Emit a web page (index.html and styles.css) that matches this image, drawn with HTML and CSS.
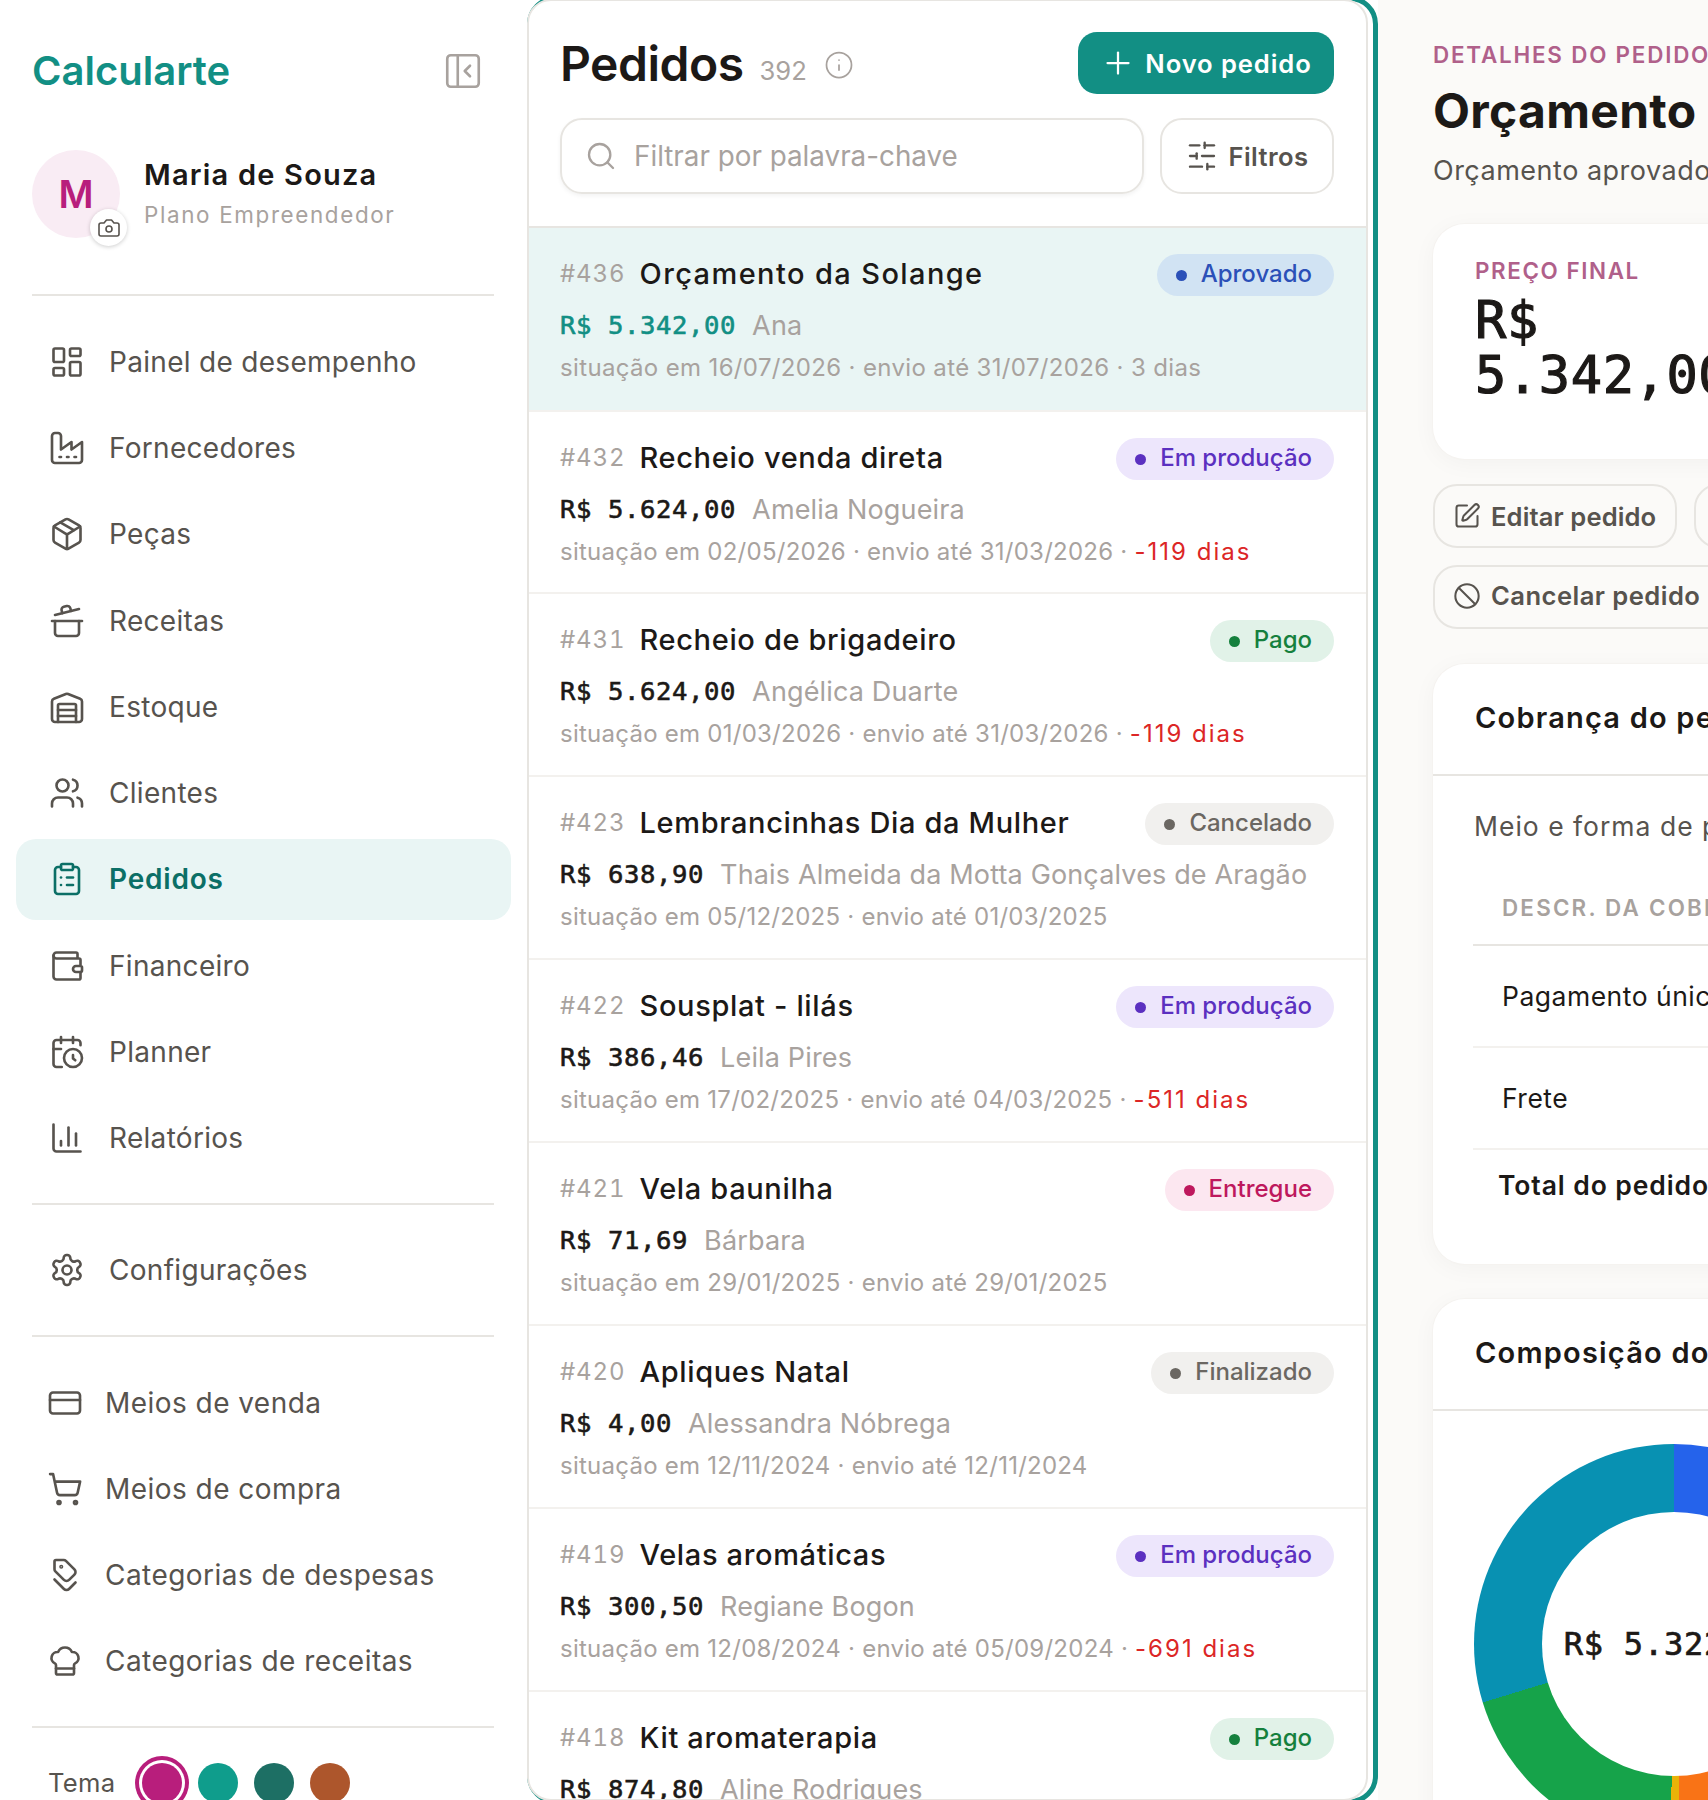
FILE: index.html
```html
<!DOCTYPE html>
<html lang="pt-BR">
<head>
  <meta charset="UTF-8" />
  <title>Calcularte - Pedidos</title>
  <link rel="stylesheet" href="styles.css">
</head>
<body>

  <aside class="side">
    <div class="brand">
      <span class="logo">Calcularte</span>
      <svg class="ico collapse" viewBox="0 0 24 24"><rect x="3" y="3" width="18" height="18" rx="2"/><path d="M9 3v18"/><path d="m16 15-3-3 3-3"/></svg>
    </div>

    <div class="profile">
      <div class="avatar">M
        <span class="cam"><svg class="ico" viewBox="0 0 24 24"><path d="M14.5 4h-5L7 7H4a2 2 0 0 0-2 2v9a2 2 0 0 0 2 2h16a2 2 0 0 0 2-2V9a2 2 0 0 0-2-2h-3l-2.5-3z"/><circle cx="12" cy="13" r="3"/></svg></span>
      </div>
      <div>
        <div class="uname">Maria de Souza</div>
        <div class="plan">Plano Empreendedor</div>
      </div>
    </div>

    <hr class="sep first">

    <nav class="nav">
      <a class="item"><svg class="ico" viewBox="0 0 24 24"><rect x="3" y="3" width="7" height="9" rx="1"/><rect x="14" y="3" width="7" height="5" rx="1"/><rect x="14" y="12" width="7" height="9" rx="1"/><rect x="3" y="16" width="7" height="5" rx="1"/></svg>Painel de desempenho</a>
      <a class="item"><svg class="ico" viewBox="0 0 24 24"><path d="M2 20a2 2 0 0 0 2 2h16a2 2 0 0 0 2-2V8l-7 5V8l-7 5V4a2 2 0 0 0-2-2H4a2 2 0 0 0-2 2Z"/><path d="M17 18h1"/><path d="M12 18h1"/><path d="M7 18h1"/></svg>Fornecedores</a>
      <a class="item"><svg class="ico" viewBox="0 0 24 24"><path d="M11 21.73a2 2 0 0 0 2 0l7-4A2 2 0 0 0 21 16V8a2 2 0 0 0-1-1.73l-7-4a2 2 0 0 0-2 0l-7 4A2 2 0 0 0 3 8v8a2 2 0 0 0 1 1.73z"/><path d="M12 22V12"/><path d="m3.3 7 7.703 4.734a2 2 0 0 0 1.994 0L20.7 7"/><path d="m7.5 4.27 9 5.15"/></svg>Peças</a>
      <a class="item"><svg class="ico" viewBox="0 0 24 24"><path d="M2 12h20"/><path d="M20 12v8a2 2 0 0 1-2 2H6a2 2 0 0 1-2-2v-8"/><path d="m4 8 16-4"/><path d="m8.86 6.78-.45-1.81a2 2 0 0 1 1.45-2.43l1.94-.48a2 2 0 0 1 2.43 1.46l.45 1.8"/></svg>Receitas</a>
      <a class="item"><svg class="ico" viewBox="0 0 24 24"><path d="M22 8.35V20a2 2 0 0 1-2 2H4a2 2 0 0 1-2-2V8.35A2 2 0 0 1 3.26 6.5l8-3.2a2 2 0 0 1 1.48 0l8 3.2A2 2 0 0 1 22 8.35Z"/><path d="M6 18h12"/><path d="M6 14h12"/><path d="M6 22V11a1 1 0 0 1 1-1h10a1 1 0 0 1 1 1v11"/></svg>Estoque</a>
      <a class="item"><svg class="ico" viewBox="0 0 24 24"><path d="M16 21v-2a4 4 0 0 0-4-4H6a4 4 0 0 0-4 4v2"/><circle cx="9" cy="7" r="4"/><path d="M22 21v-2a4 4 0 0 0-3-3.87"/><path d="M16 3.13a4 4 0 0 1 0 7.75"/></svg>Clientes</a>
      <a class="item on"><svg class="ico" viewBox="0 0 24 24"><rect x="8" y="2" width="8" height="4" rx="1"/><path d="M16 4h2a2 2 0 0 1 2 2v14a2 2 0 0 1-2 2H6a2 2 0 0 1-2-2V6a2 2 0 0 1 2-2h2"/><path d="M12 11h4"/><path d="M12 16h4"/><path d="M8 11h.01"/><path d="M8 16h.01"/></svg>Pedidos</a>
      <a class="item"><svg class="ico" viewBox="0 0 24 24"><path d="M19 7V4a1 1 0 0 0-1-1H5a2 2 0 0 0 0 4h15a1 1 0 0 1 1 1v4h-3a2 2 0 0 0 0 4h3a1 1 0 0 0 1-1v-2a1 1 0 0 0-1-1"/><path d="M3 5v14a2 2 0 0 0 2 2h15a1 1 0 0 0 1-1v-4"/></svg>Financeiro</a>
      <a class="item"><svg class="ico" viewBox="0 0 24 24"><path d="M21 7.5V6a2 2 0 0 0-2-2H5a2 2 0 0 0-2 2v14a2 2 0 0 0 2 2h3.5"/><path d="M16 2v4"/><path d="M8 2v4"/><path d="M3 10h5"/><path d="M17.5 17.5 16 16.3V14"/><circle cx="16" cy="16" r="6"/></svg>Planner</a>
      <a class="item"><svg class="ico" viewBox="0 0 24 24"><path d="M3 3v16a2 2 0 0 0 2 2h16"/><path d="M18 17V9"/><path d="M13 17V5"/><path d="M8 17v-3"/></svg>Relatórios</a>
    </nav>

    <hr class="sep">

    <nav class="nav">
      <a class="item"><svg class="ico" viewBox="0 0 24 24"><path d="M12.22 2h-.44a2 2 0 0 0-2 2v.18a2 2 0 0 1-1 1.73l-.43.25a2 2 0 0 1-2 0l-.15-.08a2 2 0 0 0-2.73.73l-.22.38a2 2 0 0 0 .73 2.73l.15.1a2 2 0 0 1 1 1.72v.51a2 2 0 0 1-1 1.74l-.15.09a2 2 0 0 0-.73 2.73l.22.38a2 2 0 0 0 2.73.73l.15-.08a2 2 0 0 1 2 0l.43.25a2 2 0 0 1 1 1.73V20a2 2 0 0 0 2 2h.44a2 2 0 0 0 2-2v-.18a2 2 0 0 1 1-1.73l.43-.25a2 2 0 0 1 2 0l.15.08a2 2 0 0 0 2.73-.73l.22-.39a2 2 0 0 0-.73-2.73l-.15-.08a2 2 0 0 1-1-1.74v-.5a2 2 0 0 1 1-1.74l.15-.09a2 2 0 0 0 .73-2.73l-.22-.38a2 2 0 0 0-2.73-.73l-.15.08a2 2 0 0 1-2 0l-.43-.25a2 2 0 0 1-1-1.73V4a2 2 0 0 0-2-2z"/><circle cx="12" cy="12" r="3"/></svg>Configurações</a>
    </nav>

    <hr class="sep">

    <nav class="nav small">
      <a class="item"><svg class="ico" viewBox="0 0 24 24"><rect x="2" y="5" width="20" height="14" rx="2"/><path d="M2 10h20"/></svg>Meios de venda</a>
      <a class="item"><svg class="ico" viewBox="0 0 24 24"><circle cx="8" cy="21" r="1"/><circle cx="19" cy="21" r="1"/><path d="M2.05 2.05h2l2.66 12.42a2 2 0 0 0 2 1.58h9.78a2 2 0 0 0 1.95-1.57l1.65-7.43H5.12"/></svg>Meios de compra</a>
      <a class="item"><svg class="ico" viewBox="0 0 24 24"><g transform="matrix(0 1 1 0 0 0)"><path d="m15 5 6.3 6.3a2.4 2.4 0 0 1 0 3.4L17 19"/><path d="M9.586 5.586A2 2 0 0 0 8.172 5H3a1 1 0 0 0-1 1v5.172a2 2 0 0 0 .586 1.414L8.29 18.29a2.426 2.426 0 0 0 3.42 0l3.58-3.58a2.426 2.426 0 0 0 0-3.42z"/><circle cx="6.5" cy="9.5" r=".5"/></g></svg>Categorias de despesas</a>
      <a class="item"><svg class="ico" viewBox="0 0 24 24"><path d="M17 21a1 1 0 0 0 1-1v-5.35c0-.457.316-.844.727-1.041a4 4 0 0 0-2.134-7.589 5 5 0 0 0-9.186 0 4 4 0 0 0-2.134 7.588c.411.198.727.585.727 1.041V20a1 1 0 0 0 1 1Z"/><path d="M6 17h12"/></svg>Categorias de receitas</a>
    </nav>

    <hr class="sep">

    <div class="theme">
      <span class="theme-label">Tema</span>
      <span class="swatch magenta"></span>
      <span class="swatch teal"></span>
      <span class="swatch forest"></span>
      <span class="swatch rust"></span>
    </div>
  </aside>

  <div class="ring">
    <main class="list">
      <header class="list-head">
        <div class="title-row">
          <h1>Pedidos</h1>
          <span class="count">392</span>
          <svg class="ico info" viewBox="0 0 24 24"><circle cx="12" cy="12" r="10"/><path d="M12 16v-4"/><path d="M12 8h.01"/></svg>
          <button class="btn-new"><svg class="ico" viewBox="0 0 24 24"><path d="M5 12h14"/><path d="M12 5v14"/></svg>Novo pedido</button>
        </div>
        <div class="search-row">
          <div class="search"><svg class="ico" viewBox="0 0 24 24"><circle cx="11" cy="11" r="8"/><path d="m21 21-4.3-4.3"/></svg>Filtrar por palavra-chave</div>
          <button class="btn-filter"><svg class="ico" viewBox="0 0 24 24"><path d="M21 4h-7"/><path d="M10 4H3"/><path d="M21 12h-9"/><path d="M8 12H3"/><path d="M21 20h-5"/><path d="M12 20H3"/><path d="M14 2v4"/><path d="M8 10v4"/><path d="M16 18v4"/></svg>Filtros</button>
        </div>
      </header>

      <div class="rows">
        <article class="row selected">
          <div class="row-top"><span class="num">#436</span><span class="name">Orçamento da Solange</span><span class="badge blue">Aprovado</span></div>
          <div class="row-price"><b>R$ 5.342,00</b><span>Ana</span></div>
          <div class="row-meta">situação em 16/07/2026 · envio até 31/07/2026 · 3 dias</div>
        </article>
        <article class="row">
          <div class="row-top"><span class="num">#432</span><span class="name">Recheio venda direta</span><span class="badge purple">Em produção</span></div>
          <div class="row-price"><b>R$ 5.624,00</b><span>Amelia Nogueira</span></div>
          <div class="row-meta">situação em 02/05/2026 · envio até 31/03/2026 · <em>-119 dias</em></div>
        </article>
        <article class="row">
          <div class="row-top"><span class="num">#431</span><span class="name">Recheio de brigadeiro</span><span class="badge green">Pago</span></div>
          <div class="row-price"><b>R$ 5.624,00</b><span>Angélica Duarte</span></div>
          <div class="row-meta">situação em 01/03/2026 · envio até 31/03/2026 · <em>-119 dias</em></div>
        </article>
        <article class="row">
          <div class="row-top"><span class="num">#423</span><span class="name">Lembrancinhas Dia da Mulher</span><span class="badge gray">Cancelado</span></div>
          <div class="row-price"><b>R$ 638,90</b><span>Thais Almeida da Motta Gonçalves de Aragão</span></div>
          <div class="row-meta">situação em 05/12/2025 · envio até 01/03/2025</div>
        </article>
        <article class="row">
          <div class="row-top"><span class="num">#422</span><span class="name">Sousplat - lilás</span><span class="badge purple">Em produção</span></div>
          <div class="row-price"><b>R$ 386,46</b><span>Leila Pires</span></div>
          <div class="row-meta">situação em 17/02/2025 · envio até 04/03/2025 · <em>-511 dias</em></div>
        </article>
        <article class="row">
          <div class="row-top"><span class="num">#421</span><span class="name">Vela baunilha</span><span class="badge pink">Entregue</span></div>
          <div class="row-price"><b>R$ 71,69</b><span>Bárbara</span></div>
          <div class="row-meta">situação em 29/01/2025 · envio até 29/01/2025</div>
        </article>
        <article class="row">
          <div class="row-top"><span class="num">#420</span><span class="name">Apliques Natal</span><span class="badge gray">Finalizado</span></div>
          <div class="row-price"><b>R$ 4,00</b><span>Alessandra Nóbrega</span></div>
          <div class="row-meta">situação em 12/11/2024 · envio até 12/11/2024</div>
        </article>
        <article class="row">
          <div class="row-top"><span class="num">#419</span><span class="name">Velas aromáticas</span><span class="badge purple">Em produção</span></div>
          <div class="row-price"><b>R$ 300,50</b><span>Regiane Bogon</span></div>
          <div class="row-meta">situação em 12/08/2024 · envio até 05/09/2024 · <em>-691 dias</em></div>
        </article>
        <article class="row">
          <div class="row-top"><span class="num">#418</span><span class="name">Kit aromaterapia</span><span class="badge green">Pago</span></div>
          <div class="row-price"><b>R$ 874,80</b><span>Aline Rodrigues</span></div>
        </article>
      </div>
    </main>
  </div>

  <section class="detail">
    <div class="detail-in">
      <div class="eyebrow">DETALHES DO PEDIDO</div>
      <h2>Orçamento da Solange</h2>
      <p class="sub">Orçamento aprovado pelo cliente</p>

      <div class="card price-card">
        <div class="eyebrow small">PREÇO FINAL</div>
        <div class="big-price">R$<br>5.342,00</div>
      </div>

      <div class="actions">
        <button class="btn-line"><svg class="ico" viewBox="0 0 24 24"><path d="M12 3H5a2 2 0 0 0-2 2v14a2 2 0 0 0 2 2h14a2 2 0 0 0 2-2v-7"/><path d="M18.375 2.625a1 1 0 0 1 3 3l-9.013 9.014a2 2 0 0 1-.853.505l-2.873.84a.5.5 0 0 1-.62-.62l.84-2.873a2 2 0 0 1 .506-.852z"/></svg>Editar pedido</button>
        <button class="btn-line">&nbsp;</button>
      </div>
      <div class="actions second">
        <button class="btn-line"><svg class="ico" viewBox="0 0 24 24"><circle cx="12" cy="12" r="10"/><path d="m4.9 4.9 14.2 14.2"/></svg>Cancelar pedido</button>
      </div>

      <div class="card charge">
        <div class="card-head">Cobrança do pedido</div>
        <div class="card-body">
          <div class="pay">Meio e forma de pagamento</div>
          <div class="th">DESCR. DA COBRANÇA</div>
          <div class="tr">Pagamento único</div>
          <div class="tr">Frete</div>
          <div class="tr total">Total do pedido</div>
        </div>
      </div>

      <div class="card comp">
        <div class="card-head">Composição do pedido</div>
        <div class="donut-wrap">
          <div class="donut"><div class="hole">R$ 5.322,00</div></div>
        </div>
      </div>
    </div>
  </section>

</body>
</html>
```
FILE: styles.css
```css
* { box-sizing: border-box; }
html, body { margin: 0; height: 1800px; overflow: hidden; }
body { display: grid; grid-template-columns: 527px 851px 1fr; font-family: "Inter", "Liberation Sans", sans-serif; background: #fff; color: #1c1917; }
button { font-family: inherit; cursor: pointer; }
.ico { width: 32px; height: 32px; flex: none; fill: none; stroke: currentColor; stroke-width: 1.75; stroke-linecap: round; stroke-linejoin: round; }

/* sidebar */
.side { padding: 54px 33px 0 32px; background: #fff; color: #57534e; }
.brand { display: flex; justify-content: space-between; align-items: center; height: 33px; padding-right: 10px; }
.logo { font-size: 40px; font-weight: 600; color: #128f84; }
.collapse { width: 42px; height: 42px; color: #a8a29e; stroke-width: 1.5; }
.profile { display: flex; align-items: center; gap: 24px; margin-top: 63px; }
.avatar { position: relative; width: 88px; height: 88px; border-radius: 50%; background: #f9ecf4; color: #b81e7c; font-size: 38px; font-weight: 600; display: flex; align-items: center; justify-content: center; }
.cam { position: absolute; right: -7px; bottom: -8px; width: 37px; height: 37px; border-radius: 50%; background: #fff; color: #57534e; box-shadow: 0 1px 4px rgba(0,0,0,.2); display: flex; align-items: center; justify-content: center; }
.cam .ico { width: 24px; height: 24px; stroke-width: 1.6; }
.uname { font-size: 29px; font-weight: 600; color: #1c1917; letter-spacing: 1.2px; line-height: 38px; margin-top: -1px; }
.plan { font-size: 22.4px; color: #a8a29e; letter-spacing: 1.65px; line-height: 32px; margin-top: 5px; }
.sep { border: 0; height: 2px; background: #e7e5e1; margin: 23.5px 0 25px; }
.sep.first { margin: 56px 0 25px; }
.nav { display: flex; flex-direction: column; gap: 4.7px; margin: 0 -17px 0 -16px; }
.item { display: flex; align-items: center; gap: 24px; height: 81.6px; padding-left: 33px; border-radius: 20px; font-size: 28px; letter-spacing: 0.3px; }
.item .ico { width: 36px; height: 36px; }
.item.on { background: #e9f5f4; color: #0b6f66; font-weight: 600; letter-spacing: 0.8px; }
.nav.small .item { padding-left: 31px; gap: 22px; letter-spacing: 0.45px; }
.theme { display: flex; align-items: center; gap: 16px; padding-left: 16px; margin-top: 35px; }
.theme-label { font-size: 25.6px; width: 77px; letter-spacing: 0.3px; }
.swatch { width: 40px; height: 40px; border-radius: 50%; }
.magenta { background: #b81e7c; box-shadow: 0 0 0 3px #fff, 0 0 0 7px #b81e7c; margin: 0 0 0 1px; }
.teal { background: #0f9d8c; }
.forest { background: #1d6f64; }
.rust { background: #ad562c; }

/* order list */
.ring { height: 1808px; margin-top: -4px; border: 5px solid #128f84; border-radius: 28px; background: #fff; position: relative; }
.list { height: 1802px; width: 841px; margin: -2px 0 0 -5px; border: 2px solid #e7e5e1; border-radius: 24px; background: #fff; overflow: hidden; }
.list-head { padding: 31px 32px 32px 31px; }
.title-row { display: flex; align-items: center; height: 62px; }
h1 { margin: 0; font-size: 48px; font-weight: 600; letter-spacing: -0.5px; }
.count { font-size: 25.6px; color: #a8a29e; margin: 14px 0 0 16px; }
.info { width: 30px; height: 30px; color: #a8a29e; margin: 3px 0 0 17px; stroke-width: 1.4; }
.btn-new { margin-left: auto; width: 256px; height: 62px; border: 0; border-radius: 19px; background: #128f84; color: #fff; font-size: 25.6px; font-weight: 600; letter-spacing: 0.9px; display: flex; align-items: center; justify-content: center; gap: 9px; }
.btn-new .ico { width: 36px; height: 36px; stroke-width: 1.5; }
.search-row { display: flex; gap: 16px; margin-top: 24px; }
.search { flex: 1; height: 76px; border: 2px solid #e7e5e1; border-radius: 22px; box-shadow: 0 2px 4px rgba(0,0,0,.05); display: flex; align-items: center; gap: 17px; padding-left: 23px; font-size: 27.8px; color: #a8a29e; }
.btn-filter { width: 174px; height: 76px; border: 2px solid #e7e5e1; border-radius: 22px; background: #fff; color: #57534e; font-size: 25.6px; font-weight: 600; letter-spacing: 0.4px; display: flex; align-items: center; justify-content: center; gap: 11px; }
.rows { border-top: 2px solid #e7e5e1; }
.row { height: 183px; padding: 26px 32px 0 31px; border-bottom: 2px solid #f3f1ee; }
.row.selected { height: 184px; background: #e9f5f4; }
.selected + .row { height: 182px; }
.row-top { display: flex; align-items: center; height: 42px; }
.num { font-size: 24px; color: #a8a29e; letter-spacing: 0.9px; margin-right: 14px; margin-bottom: 4px; font-variant-numeric: tabular-nums; }
.name { font-size: 29px; font-weight: 500; letter-spacing: 0.65px; margin-bottom: 4px; }
.selected .name { letter-spacing: 1.4px; }
.badge { margin-left: auto; height: 42px; border-radius: 21px; padding: 0 22px 3px 19px; font-size: 24px; font-weight: 500; display: flex; align-items: center; gap: 14px; }
.badge::before { content: ""; width: 11px; height: 11px; border-radius: 50%; background: currentColor; margin-top: 3px; }
.blue { background: #d1e3f3; color: #2b50b8; }
.purple { background: #ede6fc; color: #5b30c0; }
.green { background: #e1f2e8; color: #15803d; }
.gray { background: #f1f0ee; color: #6b6762; }
.pink { background: #fce7f0; color: #be185d; }
.row-price { display: flex; align-items: center; gap: 16px; height: 36px; margin-top: 11px; font-size: 27px; letter-spacing: 0.15px; color: #a8a29e; }
.row-price b { font-family: "DejaVu Sans Mono", "Liberation Mono", monospace; font-size: 25.6px; font-weight: 400; -webkit-text-stroke: 0.6px currentColor; color: #1c1917; letter-spacing: 0.6px; }
.selected .row-price b { color: #128f84; }
.row-meta { line-height: 30px; margin-top: 10px; font-size: 24px; color: #a8a29e; letter-spacing: 0.25px; }
.selected .row-meta { letter-spacing: 0.35px; }
.row-meta em { font-style: normal; color: #dc2626; letter-spacing: 2px; }

/* detail panel */
.detail { background: #fbfaf8; overflow: hidden; padding: 41px 0 0 55px; }
.detail-in { width: 900px; }
.eyebrow { font-size: 22.4px; font-weight: 600; letter-spacing: 1.8px; color: #b0608a; line-height: 28px; }
h2 { margin: 12px 0 0; font-size: 48px; font-weight: 700; line-height: 60px; letter-spacing: 0.3px; }
.sub { margin: 12px 0 0; font-size: 27px; line-height: 36px; color: #57534e; letter-spacing: 0.5px; }
.card { background: #fff; border-radius: 32px; box-shadow: 0 0 0 1px #f5f3f0, 0 4px 24px rgba(0,0,0,.04); }
.price-card { margin-top: 35px; height: 235px; padding: 33px 42px 0; }
.eyebrow.small { font-size: 22.4px; letter-spacing: 1.6px; }
.big-price { margin-top: 8px; font-family: "DejaVu Sans Mono", "Liberation Mono", monospace; font-size: 52px; font-weight: 400; -webkit-text-stroke: 1.2px currentColor; line-height: 55px; letter-spacing: 0.6px; }
.actions { display: flex; gap: 17px; margin-top: 25px; }
.actions.second { margin-top: 17px; }
.btn-line { height: 64px; width: 244px; border: 2px solid #e7e5e1; border-radius: 24px; background: transparent; color: #57534e; font-size: 25.6px; font-weight: 600; letter-spacing: 0.1px; display: flex; align-items: center; gap: 10px; padding: 0 0 0 18px; }
.btn-line .ico { width: 28px; height: 28px; }
.second .btn-line { width: 330px; height: 64px; padding-bottom: 3px; letter-spacing: 0.45px; }
.charge { margin-top: 35px; height: 600px; }
.comp { margin-top: 35px; height: 700px; }
.card-head { height: 112px; padding: 0 42px 3px; display: flex; align-items: center; border-bottom: 2px solid #e7e5e1; font-size: 29px; font-weight: 600; letter-spacing: 1.2px; }
.card-body { padding: 32px 40px 0; }
.pay { margin-left: 1px; font-size: 26.5px; line-height: 36px; color: #57534e; letter-spacing: 1px; }
.th { margin-top: 41px; height: 61px; padding: 8px 29px 0; border-bottom: 2px solid #e7e5e1; font-size: 22.4px; line-height: 30px; font-weight: 600; letter-spacing: 2.2px; color: #a8a29e; }
.tr { height: 102px; padding-left: 29px; display: flex; align-items: center; border-bottom: 2px solid #f3f1ee; font-size: 26.5px; letter-spacing: 0.5px; }
.tr.total { height: 70px; padding-left: 25px; border: 0; font-weight: 600; letter-spacing: 0.9px; }
.donut-wrap { padding: 33px 0 0 41px; }
.donut { width: 400px; height: 400px; border-radius: 50%; background: conic-gradient(#2563eb 0 90deg, #f97316 90deg 178deg, #eab308 178deg 181deg, #16a34a 181deg 253deg, #0891b2 253deg 360deg); display: flex; align-items: center; justify-content: center; }
.hole { width: 264px; height: 264px; border-radius: 50%; background: #fff; display: flex; align-items: center; justify-content: center; font-family: "DejaVu Sans Mono", "Liberation Mono", monospace; font-size: 32px; font-weight: 400; -webkit-text-stroke: 0.7px currentColor; letter-spacing: 0.8px; white-space: nowrap; }
```
